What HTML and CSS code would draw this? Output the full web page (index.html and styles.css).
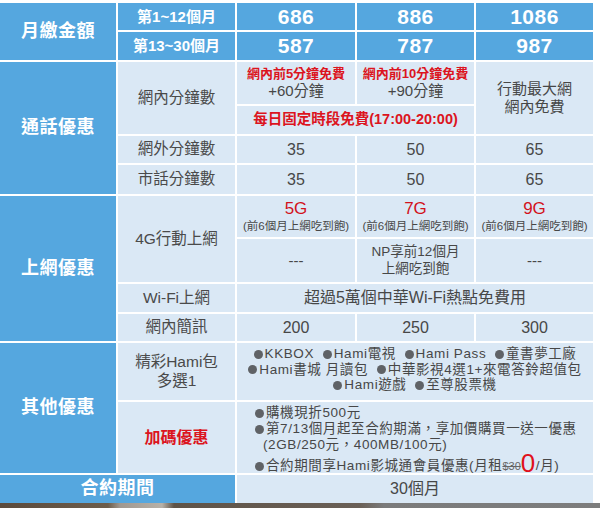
FILE: index.html
```html
<!DOCTYPE html>
<html lang="zh-Hant">
<head>
<meta charset="utf-8">
<title>資費表</title>
<link rel="stylesheet" href="styles.css">
</head>
<body>
<div class="table">
  <div class="cat rs2">月繳金額</div>
  <div class="hd">第1~12個月</div>
  <div class="price">686</div>
  <div class="price">886</div>
  <div class="price">1086</div>
  <div class="hd">第13~30個月</div>
  <div class="price">587</div>
  <div class="price">787</div>
  <div class="price">987</div>

  <div class="cat rs4">通話優惠</div>
  <div class="lbl rs2">網內分鐘數</div>
  <div class="cell stack"><span class="red-s">網內前5分鐘免費</span><span>+60分鐘</span></div>
  <div class="cell stack"><span class="red-s">網內前10分鐘免費</span><span>+90分鐘</span></div>
  <div class="cell rs2 stack"><span>行動最大網</span><span>網內免費</span></div>
  <div class="cell cs2 red-m">每日固定時段免費(17:00-20:00)</div>
  <div class="lbl">網外分鐘數</div>
  <div class="cell num">35</div>
  <div class="cell num">50</div>
  <div class="cell num">65</div>
  <div class="lbl">市話分鐘數</div>
  <div class="cell num">35</div>
  <div class="cell num">50</div>
  <div class="cell num">65</div>

  <div class="cat rs4">上網優惠</div>
  <div class="lbl rs2">4G行動上網</div>
  <div class="cell stack"><span class="gb">5G</span><span class="tiny">(前6個月上網吃到飽)</span></div>
  <div class="cell stack"><span class="gb">7G</span><span class="tiny">(前6個月上網吃到飽)</span></div>
  <div class="cell stack"><span class="gb">9G</span><span class="tiny">(前6個月上網吃到飽)</span></div>
  <div class="cell">---</div>
  <div class="cell stack small"><span>NP享前12個月</span><span>上網吃到飽</span></div>
  <div class="cell">---</div>
  <div class="lbl">Wi-Fi上網</div>
  <div class="cell cs3 wide">超過5萬個中華Wi-Fi熱點免費用</div>
  <div class="lbl">網內簡訊</div>
  <div class="cell num">200</div>
  <div class="cell num">250</div>
  <div class="cell num">300</div>

  <div class="cat rs2">其他優惠</div>
  <div class="lbl stack"><span>精彩Hami包</span><span>多選1</span></div>
  <div class="cell cs3 list-c">
    <p><span class="b"></span>KKBOX&nbsp; <span class="b"></span>Hami電視&nbsp; <span class="b"></span>Hami Pass&nbsp; <span class="b"></span>童書夢工廠</p>
    <p><span class="b"></span>Hami書城 月讀包&nbsp; <span class="b"></span>中華影視4選1+來電答鈴超值包</p>
    <p><span class="b"></span>Hami遊戲&nbsp; <span class="b"></span>至尊股票機</p>
  </div>
  <div class="lbl red-l">加碼優惠</div>
  <div class="cell cs3 list-l">
    <p><span class="b"></span>購機現折500元</p>
    <p><span class="b"></span>第7/13個月起至合約期滿，享加價購買一送一優惠</p>
    <p class="indent">(2GB/250元，400MB/100元)</p>
    <p class="last"><span class="b"></span>合約期間享Hami影城通會員優惠(月租<s class="strike">$30</s><span class="zero">0</span>/月)</p>
  </div>

  <div class="cat cs2 term">合約期間</div>
  <div class="cell cs3 wide">30個月</div>
</div>
<div class="strip"></div>
</body>
</html>
```
FILE: styles.css
```css
html, body {
  margin: 0;
  padding: 0;
  background: #ffffff;
}
body {
  width: 600px;
  height: 508px;
  overflow: hidden;
  padding-top: 3px;
  box-sizing: border-box;
  font-family: "Liberation Sans", "Noto Sans CJK TC", sans-serif;
  color: #474747;
}
.table {
  display: grid;
  grid-template-columns: 116px 117px 118px 117px 117px;
  grid-template-rows: 27px 28px 42px 28px 27px 29px 41px 43px 28px 27px 57px 71px 28px;
  gap: 2px;
}
.table > div {
  display: flex;
  align-items: center;
  justify-content: center;
  text-align: center;
  background: #dae8f5;
  font-size: 15px;
  line-height: 1.2;
}
.rs2 { grid-row: span 2; }
.rs4 { grid-row: span 4; }
.cs2 { grid-column: span 2; }
.cs3 { grid-column: span 3; }

.table > .cat {
  background: #55a7df;
  color: #ffffff;
  font-weight: bold;
  font-size: 18px;
  letter-spacing: 0.5px;
}
.table > .hd {
  background: #55a7df;
  color: #ffffff;
  font-weight: bold;
  font-size: 15px;
}
.table > .price {
  background: #55a7df;
  color: #ffffff;
  font-weight: bold;
  font-size: 21px;
  letter-spacing: 0.5px;
}
.table > .lbl {
  font-size: 15.5px;
  color: #4a4a4a;
}
.table > .stack {
  flex-direction: column;
}
.red-s {
  color: #dc1420;
  font-weight: bold;
  font-size: 13px;
}
.table > .red-m {
  color: #dc1420;
  font-weight: bold;
  font-size: 14.5px;
}
.table > .red-l {
  color: #dc1420;
  font-weight: bold;
  font-size: 16px;
}
.table > .num {
  font-size: 16px;
}
.gb {
  color: #d2121c;
  font-size: 17px;
  line-height: 1.15;
}
.tiny {
  font-size: 11.5px;
  margin-top: 2px;
}
.table > .small {
  font-size: 13.5px;
}
.table > .wide {
  font-size: 16px;
}
.table > .term {
  font-size: 18px;
}
.table > .list-c {
  flex-direction: column;
  font-size: 13.5px;
  line-height: 15.5px;
  letter-spacing: 0.6px;
  padding-bottom: 4px;
}
.table > .list-l {
  flex-direction: column;
  align-items: flex-start;
  justify-content: flex-start;
  text-align: left;
  font-size: 13.5px;
  line-height: 16px;
  letter-spacing: 0.6px;
  padding: 3px 0 0 18px;
}
.list-c p, .list-l p {
  margin: 0;
  white-space: nowrap;
}
.b {
  display: inline-block;
  width: 9px;
  height: 9px;
  border-radius: 50%;
  background: #5f6266;
  margin-right: 2px;
  vertical-align: -0.5px;
}
.indent {
  padding-left: 8px;
}
.last {
  line-height: 20px;
}
.strike {
  font-size: 11px;
  color: #666666;
  letter-spacing: 0;
}
.zero {
  color: #e0101a;
  font-size: 26px;
  line-height: 20px;
  vertical-align: -2px;
}
.strip {
  height: 5px;
  background: linear-gradient(90deg, #5b4a3c 0%, #6d5d4b 18%, #a09890 20%, #b7b1a8 27%, #5f5347 29%, #6a6057 60%, #7b7b7b 64%, #7d7d7d 100%);
}
```
